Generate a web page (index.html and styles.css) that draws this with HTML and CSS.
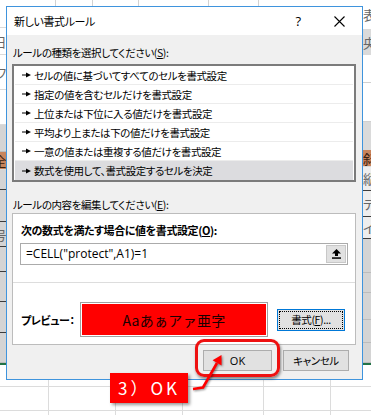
FILE: index.html
```html
<!doctype html>
<html lang="ja">
	<head>
		<meta charset="UTF-8" />
		<meta name="viewport" content="width=device-width, initial-scale=1.0" />
		<title>新しい書式ルール</title>
		<link rel="stylesheet" href="styles.css">
	</head>
	<body>
		<div class="sheet-top"></div>
		<div class="sheet-left">
			<div class="cell" style="height:28px"></div>
			<div class="cell txt" style="height:27px">日</div>
			<div class="cell txt" style="height:35px">フ</div>
			<div class="cell" style="height:35px"></div>
			<div class="cell gray" style="height:27px"></div>
			<div class="cell orange txt" style="height:18px">全</div>
			<div class="cell gray dark" style="height:20px"></div>
			<div class="cell gray dark" style="height:32px"></div>
			<div class="cell gray dark txt" style="height:25px">号</div>
			<div class="cell gray dark" style="height:25px"></div>
			<div class="cell gray dark" style="height:30px"></div>
			<div class="cell gray dark" style="height:31px"></div>
			<div class="cell gray" style="height:30px"></div>
			<div class="green"></div>
		</div>
		<div class="dialog">
			<div class="titlebar">
				<span class="title">新しい書式ルール</span>
				<span class="help">?</span>
				<span class="close">
					<svg width="11" height="11" viewBox="0 0 11 11"><path d="M0.5 0.5 L10.5 10.5 M10.5 0.5 L0.5 10.5" stroke="#000" stroke-width="1.1" fill="none"/></svg>
				</span>
			</div>
			<div class="content">
				<div class="label">ルールの種類を選択してください(<u>S</u>):</div>
				<ul class="rules">
					<li><svg class="pointer" viewBox="0 0 9 6"><path d="M0 2.4 H4 V0.5 L9 3 L4 5.5 V3.6 H0 Z"/></svg>セルの値に基づいてすべてのセルを書式設定</li>
					<li><svg class="pointer" viewBox="0 0 9 6"><path d="M0 2.4 H4 V0.5 L9 3 L4 5.5 V3.6 H0 Z"/></svg>指定の値を含むセルだけを書式設定</li>
					<li><svg class="pointer" viewBox="0 0 9 6"><path d="M0 2.4 H4 V0.5 L9 3 L4 5.5 V3.6 H0 Z"/></svg>上位または下位に入る値だけを書式設定</li>
					<li><svg class="pointer" viewBox="0 0 9 6"><path d="M0 2.4 H4 V0.5 L9 3 L4 5.5 V3.6 H0 Z"/></svg>平均より上または下の値だけを書式設定</li>
					<li><svg class="pointer" viewBox="0 0 9 6"><path d="M0 2.4 H4 V0.5 L9 3 L4 5.5 V3.6 H0 Z"/></svg>一意の値または重複する値だけを書式設定</li>
					<li class="selected"><svg class="pointer" viewBox="0 0 9 6"><path d="M0 2.4 H4 V0.5 L9 3 L4 5.5 V3.6 H0 Z"/></svg>数式を使用して、書式設定するセルを決定</li>
				</ul>
				<div class="label second">ルールの内容を編集してください(<u>E</u>):</div>
				<div class="panel">
					<div class="bold heading">次の数式を満たす場合に値を書式設定(<u>O</u>):</div>
					<div class="formula">
						<span class="formula-text">=CELL("protect",A1)=1</span>
						<span class="collapse">
							<svg width="9" height="10" viewBox="0 0 9 10"><path d="M4.5 0 L9 4.5 H6 V7 H3 V4.5 H0 Z"/><rect x="0" y="8.3" width="9" height="1.5"/></svg>
						</span>
					</div>
					<div class="sep"></div>
					<div class="preview-row">
						<span class="bold preview-label">プレビュー：</span>
						<div class="preview"><div class="preview-fill">Aaあぁアァ亜字</div></div>
						<button class="btn format"><span class="focus">書式(<u>F</u>)...</span></button>
					</div>
				</div>
				<div class="actions">
					<button class="btn ok">OK</button>
					<button class="btn cancel">キャンセル</button>
				</div>
			</div>
		</div>
		<div class="sheet-right">
			<div class="cell txt" style="height:30px">表</div>
			<div class="cell lgray txt" style="height:25px">央</div>
			<div class="cell line" style="height:28px"></div>
			<div class="cell line" style="height:39px"></div>
			<div class="cell lgray" style="height:28px"></div>
			<div class="cell orange txt" style="height:17px">斜</div>
			<div class="cell pale dark txt" style="height:24px">縦</div>
			<div class="cell pale dark txt" style="height:26px">テ</div>
			<div class="cell pale dark txt" style="height:22px">イ</div>
			<div class="cell gray" style="height:34px"></div>
			<div class="cell gray" style="height:20px"></div>
			<div class="cell gray" style="height:27px"></div>
			<div class="cell gray" style="height:23px"></div>
			<div class="cell gray" style="height:20px"></div>
			<div class="green"></div>
		</div>
		<div class="sheet-bottom"></div>

		<div class="ring"></div>
		<svg class="arrow" width="44" height="44" viewBox="0 0 44 44">
			<path d="M8 39 L18 37.5 L32 13" stroke="#f00" stroke-width="2.6" fill="none" stroke-linejoin="round"/>
			<path d="M36.5 5 L36.6 15.5 L27.6 10.3 Z" fill="#f00"/>
		</svg>
		<div class="tag">3）OK</div>
	</body>
</html>
```

FILE: styles.css
```css
body {
	margin: 0;
	width: 371px;
	height: 415px;
	overflow: hidden;
	position: relative;
	display: grid;
	grid-template-columns: 6px 357px 8px;
	grid-template-rows: 6px 374px 35px;
	background: #fff;
	font-family: "Noto Sans CJK JP", "Noto Sans", sans-serif;
	font-size: 10.5px;
	letter-spacing: -0.4px;
	font-feature-settings: "palt";
	color: #000;
}

/* spreadsheet behind the dialog */
.sheet-top {
	grid-column: 2;
	grid-row: 1;
	background-image:
		linear-gradient(#d2d2d2, #d2d2d2),
		linear-gradient(#d2d2d2, #d2d2d2),
		linear-gradient(#d2d2d2, #d2d2d2),
		linear-gradient(#d2d2d2, #d2d2d2),
		linear-gradient(#d2d2d2, #d2d2d2);
	background-size: 1px 100%;
	background-repeat: no-repeat;
	background-position: 49px 0, 86px 0, 132px 0, 202px 0, 252px 0;
}
.sheet-left,
.sheet-right {
	grid-row: 1 / 3;
	display: flex;
	flex-direction: column;
	overflow: hidden;
}
.sheet-left {
	grid-column: 1;
}
.sheet-right {
	grid-column: 3;
}
.cell {
	flex: none;
	box-sizing: border-box;
	border-bottom: 1px solid #dadada;
	font-size: 13px;
	line-height: 1;
	color: #666;
	display: flex;
	align-items: center;
	white-space: nowrap;
}
.sheet-left .cell {
	justify-content: flex-end;
}
.gray {
	background: #d4d4d4;
	border-bottom-color: #bcbcbc;
}
.lgray {
	background: #dadada;
}
.pale {
	background: #eeeeee;
}
.orange {
	background: #c8845c;
	color: #3a2010;
}
.dark {
	border-bottom-color: #3c3c3c;
}
.line {
	border-bottom-color: #d0d0d0;
}
.green {
	height: 2px;
	flex: none;
	background: #217346;
}
.sheet-bottom {
	grid-column: 1 / 4;
	grid-row: 3;
	background-image:
		linear-gradient(#dcdcdc, #dcdcdc),
		linear-gradient(#dcdcdc, #dcdcdc),
		linear-gradient(#dcdcdc, #dcdcdc),
		linear-gradient(#dcdcdc, #dcdcdc),
		linear-gradient(#dcdcdc, #dcdcdc),
		linear-gradient(#dcdcdc, #dcdcdc),
		linear-gradient(#dcdcdc, #dcdcdc);
	background-repeat: no-repeat;
	background-size: 1px 100%, 1px 100%, 1px 100%, 1px 100%, 1px 100%, 100% 1px, 100% 1px;
	background-position: 48px 0, 115px 0, 182px 0, 263px 0, 330px 0, 0 6px, 0 30px;
}

/* dialog */
.dialog {
	grid-column: 2;
	grid-row: 2;
	box-sizing: border-box;
	border: 1px solid #3f94dd;
	background: #f0f0f0;
	display: flex;
	flex-direction: column;
}
.titlebar {
	height: 28px;
	background: #fff;
	display: flex;
	align-items: center;
	padding-left: 7px;
	font-size: 11px;
}
.title {
	flex: 1;
}
.help {
	width: 38px;
	text-align: center;
	font-size: 13px;
	font-family: "Open Sans", sans-serif;
}
.close {
	width: 45px;
	display: flex;
	justify-content: center;
}
.content {
	flex: 1;
	padding: 9px 6px 8px 5px;
}
.label {
	height: 17px;
	line-height: 17px;
	padding-left: 1px;
}
.label.second {
	margin-top: 14px;
}
.rules {
	list-style: none;
	margin: 3px 0 0;
	padding: 0 1px;
	background: #fff;
	border: 2px solid #7b7b7b;
}
.rules li {
	height: 19px;
	box-sizing: border-box;
	border-bottom: 1px solid #ececec;
	display: flex;
	align-items: center;
	padding-left: 7px;
}
.rules li:last-child {
	border-bottom: 0;
}
.rules .selected {
	background: #dcdcdf;
}
.pointer {
	width: 9px;
	height: 6px;
	margin-right: 3px;
	fill: #000;
}
.panel {
	background: #fff;
	border: 1px solid #bcbcbc;
	padding: 0 7px 7px;
}
.bold {
	font-weight: bold;
	font-size: 11px;
}
.heading {
	padding: 8px 0 0 1px;
	height: 17px;
	line-height: 17px;
}
.formula {
	margin-top: 4px;
	height: 22px;
	box-sizing: border-box;
	border: 1px solid #ababab;
	display: flex;
	align-items: stretch;
}
.formula-text {
	flex: 1;
	padding-left: 5px;
	font-family: "Open Sans", sans-serif;
	font-size: 12px;
	letter-spacing: 0;
	line-height: 20px;
}
.collapse {
	width: 20px;
	margin: 1px;
	background: #e1e1e1;
	border: 1px solid #c8c8c8;
	box-sizing: border-box;
	display: flex;
	align-items: center;
	justify-content: center;
}
.sep {
	margin: 17px -7px 0;
	height: 1px;
	background: #dddddd;
}
.preview-row {
	margin-top: 19px;
	display: flex;
	align-items: center;
}
.preview-label {
	flex: none;
	width: 59px;
	padding-left: 1px;
	white-space: nowrap;
}
.preview {
	flex: none;
	width: 188px;
	height: 35px;
	box-sizing: border-box;
	border: 1px solid #a0a0a0;
	padding: 1px;
}
.preview-fill {
	height: 100%;
	background: #f00;
	color: #1a0000;
	font-size: 14px;
	letter-spacing: 0.3px;
	display: flex;
	align-items: center;
	justify-content: center;
	font-feature-settings: normal;
}
.btn {
	font: inherit;
	letter-spacing: inherit;
	color: #000;
	background: #e1e1e1;
	border: 1px solid #adadad;
	padding: 0;
	height: 21px;
}
.format {
	flex: none;
	margin-left: 9px;
	width: 68px;
	height: 22px;
	border-color: #0078d7;
	padding: 1px;
}
.focus {
	display: flex;
	height: 100%;
	box-sizing: border-box;
	align-items: center;
	justify-content: center;
	border: 1px dotted #000;
}
.actions {
	margin-top: 5px;
	display: flex;
	justify-content: flex-end;
	gap: 11px;
	padding-right: 7px;
}
.ok {
	width: 69px;
	font-family: "Open Sans", sans-serif;
	font-size: 11px;
	letter-spacing: 0;
}
.cancel {
	width: 66px;
}

/* annotation drawn over the screenshot */
.ring {
	position: absolute;
	left: 195px;
	top: 339px;
	width: 85px;
	height: 38px;
	box-sizing: border-box;
	border: 3px solid #ee1111;
	border-radius: 9px;
	box-shadow: 1px 2px 3px rgba(0, 0, 0, 0.45);
}
.arrow {
	position: absolute;
	left: 185px;
	top: 350px;
	filter: drop-shadow(1px 1px 1px rgba(0, 0, 0, 0.45));
}
.tag {
	position: absolute;
	left: 110px;
	top: 373px;
	width: 78px;
	height: 30px;
	background: #f00;
	color: #fff;
	font-size: 17px;
	letter-spacing: 3px;
	line-height: 30px;
	text-align: center;
	box-shadow: 2px 2px 3px rgba(0, 0, 0, 0.4);
	font-feature-settings: normal;
}
```
